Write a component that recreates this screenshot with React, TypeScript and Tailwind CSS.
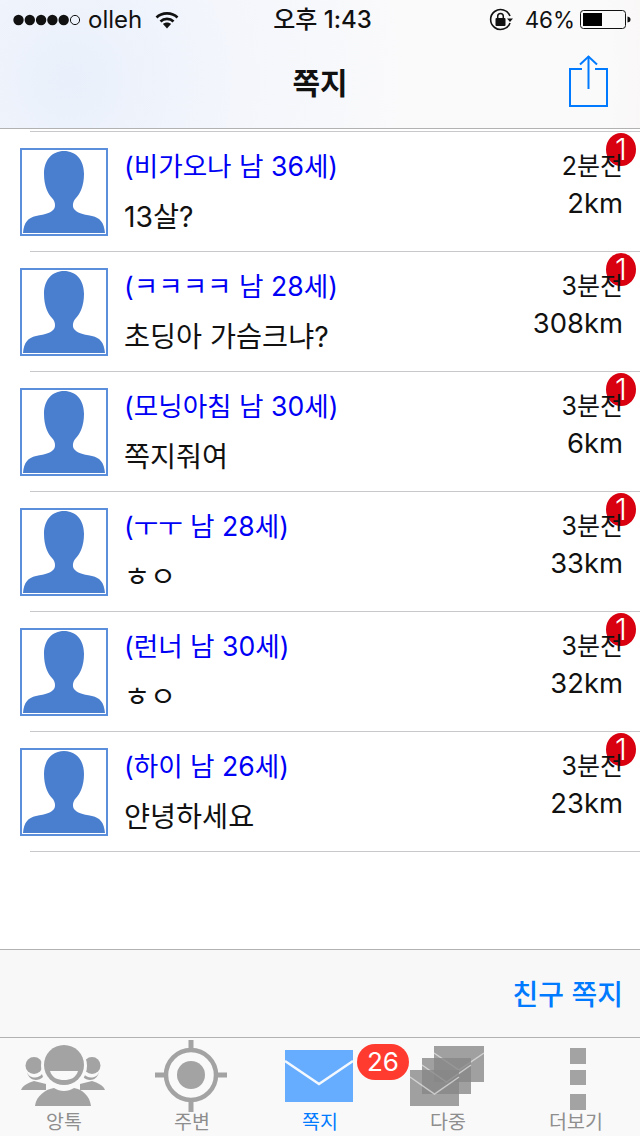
const FONT = "font-['Inter','Noto_Sans_CJK_KR',sans-serif]";

const rows = [
  { name: "(비가오나 남 36세)", msg: "13살?", time: "2분전", km: "2km" },
  { name: "(ㅋㅋㅋㅋ 남 28세)", msg: "초딩아 가슴크냐?", time: "3분전", km: "308km" },
  { name: "(모닝아침 남 30세)", msg: "쪽지줘여", time: "3분전", km: "6km" },
  { name: "(ㅜㅜ 남 28세)", msg: "ㅎㅇ", time: "3분전", km: "33km" },
  { name: "(런너 남 30세)", msg: "ㅎㅇ", time: "3분전", km: "32km" },
  { name: "(하이 남 26세)", msg: "얀녕하세요", time: "3분전", km: "23km" },
];

function Avatar() {
  return (
    <div className="w-[88px] h-[88px] shrink-0 border-2 border-[#5c8fdb] bg-white">
      <svg width="84" height="84" viewBox="2 2 84 84" className="block">
        <path
          fill="#4a7fd0"
          d="M44 3C56 3 64 12 64 26C64 38 60 46 56 50C53 53 52 58 54 61C57 65 62 66 72 68C80 70 84 74 85 85L3 85C4 74 8 70 16 68C26 66 31 65 34 61C36 58 35 53 32 50C28 46 24 38 24 26C24 12 32 3 44 3Z"
        />
      </svg>
    </div>
  );
}

function Row({ r }: { r: (typeof rows)[number] }) {
  return (
    <div className="h-[120px] flex flex-col">
      <div className="ml-[30px] h-px bg-[#c8c7cc] shrink-0" />
      <div className="relative flex-1 flex pl-5 pr-[17px] pt-4">
        <div className="absolute right-[4px] top-[1px] w-[30px] h-[33px] rounded-[50%] bg-[#d9000f] text-white font-light text-[30px] leading-[33px] text-center">
          1
        </div>
        <Avatar />
        <div className="ml-[16px] flex-1 min-w-0">
          <div className="mt-px text-[26.6px] leading-[34px] text-[#0000f5]">{r.name}</div>
          <div className="mt-[17px] text-[28.3px] leading-[34px] text-[#111]">{r.msg}</div>
        </div>
        <div className="relative text-right text-[#111]">
          <div className="mt-px text-[25px] leading-[34px]">{r.time}</div>
          <div className="mt-[3px] text-[27.4px] leading-[34px]">{r.km}</div>
        </div>
      </div>
    </div>
  );
}

function StatusBar() {
  return (
    <div className="h-10 pl-[13px] pr-2 grid grid-cols-[1fr_auto_1fr] items-center text-[#111] text-[24px] leading-[30px]">
      <div className="flex items-center">
        <svg width="68" height="12" viewBox="0 0 68 12" className="block">
          {[5.5, 16.8, 28.1, 39.4, 50.7].map((x) => (
            <circle key={x} cx={x} cy="6" r="5.2" fill="#111" />
          ))}
          <circle cx="62" cy="6" r="4.6" fill="none" stroke="#111" strokeWidth="1" />
        </svg>
        <span className="ml-[7px]">olleh</span>
        <svg width="24" height="18" viewBox="0 0 24 18" className="block ml-[13px]">
          <path d="M1.5 6.5C7 1 17 1 22.5 6.5" fill="none" stroke="#111" strokeWidth="2.6" />
          <path d="M5.5 10.5C9 7 15 7 18.5 10.5" fill="none" stroke="#111" strokeWidth="2.6" />
          <path d="M8 13L12 17.5L16 13C14 11 10 11 8 13Z" fill="#111" />
        </svg>
      </div>
      <div className="font-medium mr-[-1px] pr-[1px]">오후 1:43</div>
      <div className="flex items-center justify-end">
        <svg width="24" height="24" viewBox="0 0 24 24" className="block">
          <path d="M21 15A10 10 0 1 1 21 8" fill="none" stroke="#111" strokeWidth="1.6" />
          <path d="M18 10.5H24L21 14Z" fill="#111" />
          <rect x="6.5" y="10" width="10" height="8" rx="1" fill="#111" />
          <path d="M8.7 10V8.2A2.8 2.8 0 0 1 14.3 8.2V10" fill="none" stroke="#111" strokeWidth="1.5" />
        </svg>
        <span className="ml-[12px] text-[22.4px]">46%</span>
        <svg width="52" height="20" viewBox="0 0 52 20" className="block ml-[5px]">
          <rect x="0.5" y="0.5" width="45" height="18" rx="3" fill="none" stroke="#111" />
          <rect x="3" y="3" width="19" height="13" fill="#000" />
          <path d="M47.5 6.5C50 7 50.5 8 50.5 9.5C50.5 11 50 12 47.5 12.5Z" fill="#111" />
        </svg>
      </div>
    </div>
  );
}

function Header() {
  return (
    <div className="h-[129px] shrink-0 border-b border-[#b2b2b2] bg-[radial-gradient(circle_at_70px_80px,#e9f0fb_0,#f4f6fc_170px,#fafafb_340px,#fafafa_540px,#f9efee_680px)]">
      <StatusBar />
      <div className="relative h-[88px]">
        <div className="text-center text-[30px] leading-[86px] font-semibold text-[#111]">쪽지</div>
        <svg width="40" height="54" viewBox="0 0 40 54" className="absolute left-[569px] top-[15px]">
          <path d="M13 14H1V51H38V14H26" fill="none" stroke="#007aff" strokeWidth="2" />
          <path d="M19.5 1.5V34" fill="none" stroke="#007aff" strokeWidth="2" />
          <path d="M11 9.5L19.5 1.5L28 9.5" fill="none" stroke="#007aff" strokeWidth="2" />
        </svg>
      </div>
    </div>
  );
}

const GRAY = "#a3a3a3";

function PeopleIcon() {
  return (
    <svg width="128" height="74" viewBox="0 0 128 74" className="block overflow-visible">
      <g fill={GRAY}>
        <circle cx="34" cy="27.5" r="8.5" />
        <circle cx="92" cy="27.5" r="8.5" />
        <path d="M21 52C23 47 28 45 34 43L46 46V52Z" />
        <path d="M105 52C103 47 98 45 92 43L80 46V52Z" />
        <path d="M27 34C29 41 39 41 42 36L43 39C38 44 29 43 27 34Z" />
        <path d="M99 34C97 41 87 41 84 36L83 39C88 44 97 43 99 34Z" />
      </g>
      <circle cx="64" cy="28" r="23" fill="#f9f9f9" />
      <circle cx="64" cy="27" r="20" fill={GRAY} />
      <path d="M50 33H78C76 40 70 42 64 42C58 42 52 40 50 33Z" fill="#f9f9f9" />
      <path d="M35 68C36 58 46 51 54 50C60 54 68 54 74 50C82 51 90 58 91 68Z" fill={GRAY} />
    </svg>
  );
}

function TargetIcon() {
  return (
    <svg width="128" height="74" viewBox="0 0 128 74" className="block overflow-visible">
      <circle cx="63" cy="37" r="25" fill="none" stroke={GRAY} strokeWidth="4.5" />
      <circle cx="63" cy="37" r="14" fill={GRAY} />
      <path d="M63 2V10M63 64V74M27 37H37M89 37H99" stroke={GRAY} strokeWidth="5" />
    </svg>
  );
}

function MailIcon() {
  return (
    <svg width="128" height="74" viewBox="0 0 128 74" className="block overflow-visible">
      <rect x="29" y="12" width="68" height="52" fill="#66adff" />
      <path d="M29 23L63 46L97 23" fill="none" stroke="#f4f8ff" strokeWidth="2.5" />
    </svg>
  );
}

function Stack() {
  const items = [
    { x: 50, y: 8, w: 50, h: 36 },
    { x: 38, y: 20, w: 49, h: 36 },
    { x: 26, y: 32, w: 49, h: 36 },
  ];
  return (
    <svg width="128" height="74" viewBox="0 0 128 74" className="block overflow-visible">
      {items.map((i) => (
        <g key={i.x}>
          <rect x={i.x} y={i.y} width={i.w} height={i.h} fill="#868686" fillOpacity="0.78" />
          <path
            d={`M${i.x} ${i.y + 7}L${i.x + i.w / 2} ${i.y + 24}L${i.x + i.w} ${i.y + 7}`}
            fill="none"
            stroke="#f4f4f4"
            strokeOpacity="0.6"
            strokeWidth="1.5"
          />
        </g>
      ))}
    </svg>
  );
}

function MoreIcon() {
  return (
    <svg width="128" height="74" viewBox="0 0 128 74" className="block overflow-visible">
      <rect x="58" y="10" width="16" height="16" fill={GRAY} />
      <rect x="58" y="32" width="16" height="15" fill={GRAY} />
      <rect x="58" y="56" width="16" height="16" fill={GRAY} />
    </svg>
  );
}

function Tab({ label, active, children }: { label: string; active?: boolean; children: React.ReactNode }) {
  return (
    <div className="relative w-32 flex flex-col items-center">
      <div className="h-[72px] w-32">{children}</div>
      <div className={`relative text-[19.5px] leading-6 ${active ? "text-[#007aff]" : "text-[#8e8e8e]"}`}>{label}</div>
    </div>
  );
}

export default function App() {
  return (
    <div className={`${FONT} w-[640px] h-[1136px] flex flex-col overflow-hidden bg-white`}>
      <Header />
      <div className="flex-1 pt-[2px]">
        {rows.map((r) => (
          <Row key={r.name} r={r} />
        ))}
        <div className="ml-[30px] h-px bg-[#c8c7cc]" />
      </div>
      <div className="h-[88px] shrink-0 border-t border-[#b2b2b2] bg-[#f8f8f8] flex items-center justify-end pr-[17px] pt-[2px]">
        <span className="text-[#007aff] text-[28px] font-medium leading-9">친구 쪽지</span>
      </div>
      <div className="relative h-[99px] shrink-0 border-t border-[#b2b2b2] bg-[#f9f9f9] flex">
        <Tab label="앙톡"><PeopleIcon /></Tab>
        <Tab label="주변"><TargetIcon /></Tab>
        <Tab label="쪽지" active><MailIcon /></Tab>
        <Tab label="다중"><Stack /></Tab>
        <Tab label="더보기"><MoreIcon /></Tab>
        <div className="absolute left-[357px] top-[6px] w-[52px] h-9 rounded-full bg-[#ff3b30] text-white text-[26px] leading-9 text-center">
          26
        </div>
      </div>
    </div>
  );
}
